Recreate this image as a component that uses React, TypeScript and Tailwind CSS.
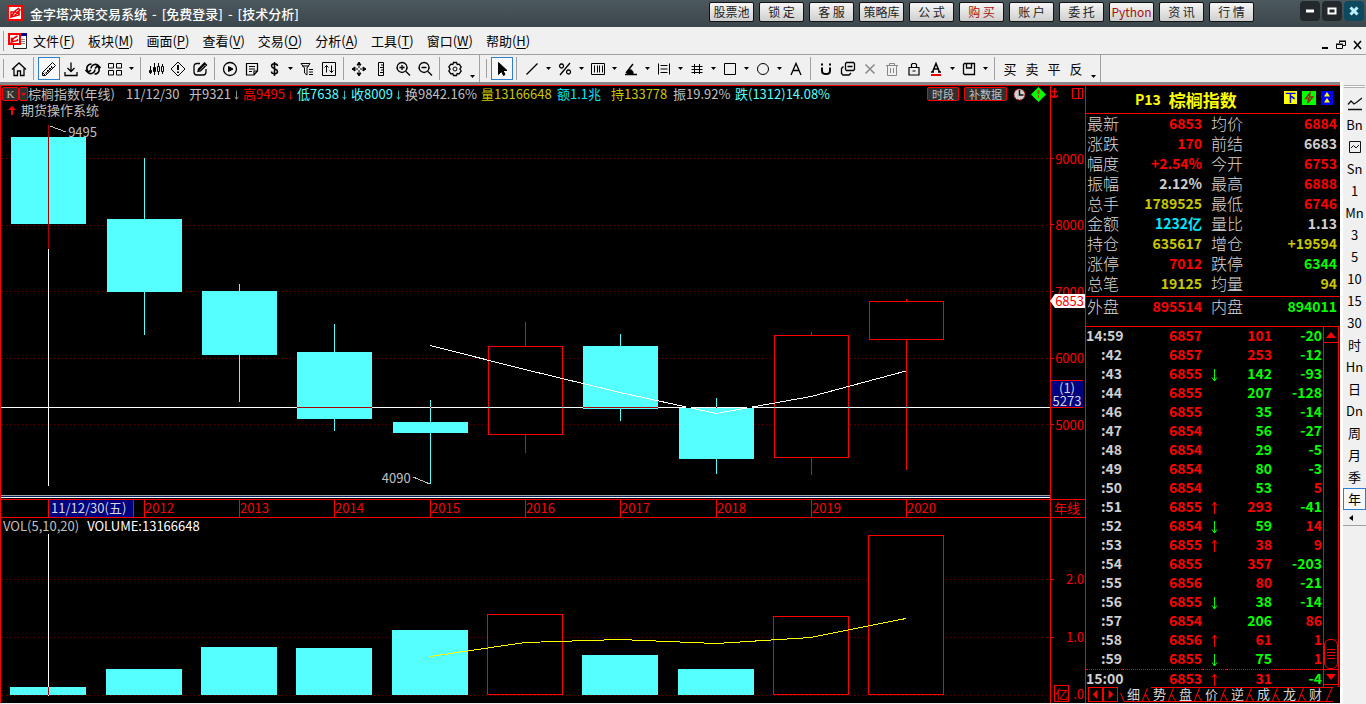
import React from 'react';

const titleButtons = ['股票池', '锁 定', '客 服', '策略库', '公 式', '购 买', '账 户', '委 托', 'Python', '资 讯', '行 情'];

const menus = [
  ['文件', 'F'],
  ['板块', 'M'],
  ['画面', 'P'],
  ['查看', 'V'],
  ['交易', 'O'],
  ['分析', 'A'],
  ['工具', 'T'],
  ['窗口', 'W'],
  ['帮助', 'H'],
];

// x = centre of the year column, body = [top, bottom], wick = [high, low]
const candles = [
  { x: 48, body: [137, 224], wick: [125, 249], up: false },
  { x: 144, body: [219, 292], wick: [158, 335], up: false },
  { x: 239, body: [291, 355], wick: [284, 402], up: false },
  { x: 334, body: [352, 419], wick: [324, 431], up: false },
  { x: 430, body: [422, 433], wick: [400, 484], up: false },
  { x: 525, body: [346, 435], wick: [322, 453], up: true },
  { x: 620, body: [346, 409], wick: [334, 421], up: false },
  { x: 716, body: [408, 459], wick: [398, 474], up: false },
  { x: 811, body: [335, 458], wick: [332, 475], up: true },
  { x: 906, body: [301, 340], wick: [299, 470], up: true },
];

const volumes = [687, 669, 647, 648, 630, 614, 655, 669, 616, 535];

const years = ['2012', '2013', '2014', '2015', '2016', '2017', '2018', '2019', '2020'];

const R = 'text-[#ff0000]';
const G = 'text-[#00ff00]';
const Y = 'text-[#c8c800]';
const W = 'text-[#d0d0d0]';
const C = 'text-[#00e8ff]';

const quotes = [
  ['最新', '6853', R, '均价', '6884', R],
  ['涨跌', '170', R, '前结', '6683', W],
  ['幅度', '+2.54%', R, '今开', '6753', R],
  ['振幅', '2.12%', W, '最高', '6888', R],
  ['总手', '1789525', Y, '最低', '6746', R],
  ['金额', '1232亿', C, '量比', '1.13', W],
  ['持仓', '635617', Y, '增仓', '+19594', Y],
  ['涨停', '7012', R, '跌停', '6344', G],
  ['总笔', '19125', Y, '均量', '94', Y],
];

const ticks = [
  ['14:59', '6857', '', '101', R, '-20'],
  [':42', '6857', '', '253', R, '-12'],
  [':43', '6855', 'down', '142', G, '-93'],
  [':44', '6855', '', '207', G, '-128'],
  [':46', '6855', '', '35', G, '-14'],
  [':47', '6854', '', '56', G, '-27'],
  [':48', '6854', '', '29', G, '-5'],
  [':49', '6854', '', '80', G, '-3'],
  [':50', '6854', '', '53', G, '5'],
  [':51', '6855', 'up', '293', R, '-41'],
  [':52', '6854', 'down', '59', G, '14'],
  [':53', '6855', 'up', '38', R, '9'],
  [':54', '6855', '', '357', R, '-203'],
  [':55', '6856', '', '80', R, '-21'],
  [':56', '6855', 'down', '38', G, '-14'],
  [':57', '6854', '', '206', G, '86'],
  [':58', '6856', 'up', '61', R, '1'],
  [':59', '6855', 'down', '75', G, '1'],
  ['15:00', '6853', 'up', '31', R, '-4'],
];

const tabs = ['细', '势', '盘', '价', '逆', '成', '龙', '财'];

const periods = ['line', 'Bn', 'box', 'Sn', '1', 'Mn', '3', '5', '10', '15', '30', '时', 'Hn', '日', 'Dn', '周', '月', '季', '年'];

const icons: Record<string, React.ReactNode> = {
  home: <path d="M1 8.500 8 2l7 6.500M3 7.500V14.500h3.500V10h3v4.500H13V7.500" strokeWidth="1.300" />,
  pencil: <path d="M1.500 11.500 11.500 1.500l3 3-10 10zM1.500 11.500v3h3M4 11.500l1.500 1.500M6 9l1.500 1.500M8 7l1.500 1.500M10 5l1.500 1.500M5 12l6-6" />,
  download: <path d="M8 1.500v9M4.500 7 8 10.500 11.500 7M2 11v3.500h12V11" strokeWidth="1.300" />,
  refresh: <path strokeWidth="1.600" d="M6.500 3C2.500 3 .5 7 3 10.500M.5 9l2.500 2.500L6 9M9.500 13c4 0 6-4 3.500-7.500M10 7.500 13 4.500l2.500 2.500M6 7.500C6 4 10 2.500 12.500 4M10 8.500c0 3.500-4 5-6.500 3.500" />,
  grid: <path d="M1.500 2.500h5v4.500h-5zM9.500 2.500h5v4.500h-5zM1.500 9.500h5V14h-5zM9.500 9.500h5V14h-5z" />,
  candles: <><path d="M2.500 5v8M6.500 2v12M10.500 2v12M14.500 3v10" /><path fill="#f0f0f0" d="M9.500 5.500h2v5h-2zM13.500 5.500h2v5h-2z" /><path fill="currentColor" d="M1.500 9.500h2v2h-2zM5.500 6.500h2v4h-2z" /></>,
  alert: <><path d="M8 1 15 8l-7 7-7-7z" /><path d="M8 4v5M8 10.500V12" strokeWidth="2" /></>,
  edit: <path strokeWidth="1.300" d="M8 2.500H5c-2 0-3 1-3 3V11c0 2 1 3 3 3h6c2 0 3-1 3-3V8M6 10.500 6.500 8 12.500 2l2 2L8.500 10zM7 9l6-6" />,
  play: <><circle cx="8" cy="8" r="6.500" strokeWidth="1.300" /><path fill="currentColor" d="M6.500 5.500v5L11 8z" /></>,
  note: <path d="M2.500 2.500h11V10L10 14H2.500zM5 5.500h6M5 8h6M10 14v-4h3.500M5 10.500h3" strokeWidth="1.200" />,
  dollar: <path strokeWidth="1.500" d="M8.500 1v14M11.500 5c0-3-6-3-6 0 0 3 6 2.500 6 5.500 0 3-6 3-6 0" />,
  filter: <path d="M2 2.500h9L8 7v7L5.500 12V7zM10 8.500h4M10 11h4M10 13.500h4M3 5h7" />,
  sort: <path d="M1.500 1.500h13v13h-13zM5.500 4.500v7M3.500 6.500l2-2 2 2M10.500 4.500v7M8.500 9.500l2 2 2-2" />,
  move: <path fill="currentColor" d="M8 1 6 4h4zM8 15l-2-3h4zM1 8l3-2v4zM15 8l-3-2v4zM8 5v2M8 9v2M5 8h2M9 8h2" />,
  ruler: <path d="M5.500 1.500h5v13h-5zM8 4h2.500M7 6.500h3.500M8 9h2.500M7 11.500h3.500" />,
  zoomin: <path d="M7 1.500a5 5 0 1 0 .1 0zM11 10.500l4 4M4.500 6.500h5M7 4v5" strokeWidth="1.300" />,
  zoomout: <path d="M7 1.500a5 5 0 1 0 .1 0zM11 10.500l4 4M4.500 6.500h5" strokeWidth="1.300" />,
  gear: <><circle cx="8" cy="8" r="2" /><path strokeWidth="1.300" d="M6.500 1.500h3l.7 2 2-.3 2 2.800L12.900 8l1.300 2-2 2.800-2-.3-.7 2h-3l-.7-2-2 .3-2-2.800L3.100 8 1.800 6l2-2.800 2 .3z" /></>,
  cursor: <path fill="currentColor" d="M4.500 1.500v12l3-3 2 4 1.500-1-2-4h4z" />,
  slash: <path strokeWidth="1.300" d="M2.500 13.500 13.500 2.500" />,
  percent: <path strokeWidth="1.300" d="M13 2 3 14M4.500 3a2 2 0 1 0 .1 0zM11.500 9a2 2 0 1 0 .1 0z" />,
  barcode: <path d="M1.500 2.500h13v11h-13zM4.500 4.500v7M7.500 4.500v7M9.500 4.500v7M12.500 4.500v7" />,
  angle: <><path strokeWidth="1.500" d="M2 13.500h12M3 12l7-9" /><path fill="currentColor" d="M5.500 9c3-1 5 1 4.500 4H4z" /></>,
  levels: <path d="M2.500 2.500v11M13.500 2.500v11M4.500 4.500h7M4.500 8h7M4.500 11.500h7" />,
  hash: <path d="M5.500 3v10M10.500 3v10M2.500 5.500h11M2.500 8.500h11M2.500 11.500h11" />,
  square: <path d="M2.500 2.500h11v11h-11z" />,
  circle: <circle cx="8" cy="8" r="5.500" />,
  letter: <path strokeWidth="1.300" d="M3 14 8 2.500 13 14M5 9.500h6" />,
  magnet: <path strokeWidth="2" d="M4 6.500V10c0 4 8 4 8 0V6.500M4 2.500v2M12 2.500v2" />,
  copy: <path d="M6.500 1.500h7l1 1v6l-1 1h-7l-1-1v-6zM3.500 5.500l-2 2v5l1.500 1.500h6l2-2M7.500 5.500h5" strokeWidth="1.300" />,
  cross: <path stroke="#888" strokeWidth="1.500" d="M3.500 3.500l9 9M12.500 3.500l-9 9" />,
  trash: <path stroke="#888" d="M2 4.500h12M5.500 4.500v-2h5v2M3.500 4.500v10h9v-10M6.500 7v5M9.500 7v5" />,
  lock: <path strokeWidth="1.200" d="M3 6.500h10v7.500H3zM5.500 6.500v-3l1-1h3l1 1v3M6.500 10h3" />,
  fontcolor: <><path strokeWidth="1.500" d="M4.500 11 8 2.500 11.500 11M5.500 8h5M3 11h3M10 11h3" /><path stroke="#e00" strokeWidth="2" d="M3 14h10" /></>,
  save: <path strokeWidth="1.300" d="M2.500 3.500l1-1h10v11h-10l-1-1zM5.500 2.500v4.500h5V2.500" />,
};

const Icon = ({ name }: { name: string }) => (
  <svg className="size-4" viewBox="0 0 16 16" fill="none" stroke="currentColor">
    {icons[name]}
  </svg>
);

const Caret = ({ low = false }: { low?: boolean }) => (
  <button aria-label="更多" className={low ? 'flex w-[13px] items-end justify-center pb-1' : 'flex w-[11px] items-center justify-center'}>
    <svg className="h-[3px] w-[5px]" viewBox="0 0 5 3">
      <path d="M0 0h5L2.500 3z" />
    </svg>
  </button>
);

// '|' separator, 'v' drop-down arrow, 'V' overflow arrow, '*' marks a pressed button
const ToolGroup = ({ items }: { items: string[] }) => (
  <div className="flex h-[27px] border-r border-[#a0a0a0]">
    <span className="my-1 ml-[3px] mr-1 w-px bg-[#a0a0a0]" />
    {items.map((item, i) => {
      if (item === '|') return <span key={i} className="my-[2px] ml-[3px] mr-1 w-px bg-[#a0a0a0]" />;
      if (item === 'v') return <Caret key={i} />;
      if (item === 'V') return <Caret key={i} low />;
      const pressed = item.endsWith('*');
      const name = item.replace('*', '');
      return (
        <button
          key={i}
          aria-label={name}
          className={
            pressed
              ? 'my-[2px] flex w-[22px] items-center justify-center border border-[#2f7fd0] bg-[#f8f8f8]'
              : 'my-[2px] flex w-[22px] items-center justify-center text-[13px]'
          }
        >
          {icons[name] ? <Icon name={name} /> : name}
        </button>
      );
    })}
  </div>
);

const TitleBar = () => (
  <header className="flex h-[27px] items-start bg-linear-to-b from-[#4b585d] to-[#3c474b] pl-[7px] pr-[2px] text-white">
    <svg className="mt-[5px] size-4" viewBox="0 0 16 16">
      <path fill="#f00" d="M0 0h16v16H0z" />
      <path fill="#fff" d="M2 2h12v12H2z" />
      <path fill="none" stroke="#e00" strokeWidth="1.500" d="M4 12V7h3.500L4 12l8-2V7L7.500 10M8 6l3.500-2.500L13 5 9.500 8z" />
    </svg>
    <h1 className="ml-[7px] flex flex-1 gap-[5px] text-[13px] font-medium leading-[28px]">
      <span>金字塔决策交易系统</span>
      <span>-</span>
      <span>[免费登录]</span>
      <span>-</span>
      <span>[技术分析]</span>
    </h1>
    <nav className="flex gap-[5px] pt-[2px]">
      {titleButtons.map((label) => (
        <button
          key={label}
          className={`h-5 w-[45px] whitespace-nowrap rounded-[2px] border border-[#111] bg-linear-to-b from-[#f6f6f6] to-[#cfcfcf] text-[12px] leading-[18px] ${
            label === '购 买' || label === 'Python' ? 'text-[#a81010]' : 'text-[#222]'
          }`}
        >
          {label}
        </button>
      ))}
    </nav>
    <div className="ml-[46px] flex gap-[2px] pt-px">
      {['M6 10h8', 'M6.500 7.500h7v5h-7z', 'M6.500 6.500l7 7M13.500 6.500l-7 7'].map((d, i) => (
        <button key={d} aria-label={['最小化', '最大化', '关闭'][i]} className={i === 2 ? 'rounded bg-[#0d4a60]' : 'rounded bg-[#22282b]'}>
          <svg className="size-5" viewBox="0 0 20 20" fill="none" stroke={i === 2 ? '#bdf0ff' : '#fff'} strokeWidth={i === 1 ? 2 : 3}>
            <path d={d} />
          </svg>
        </button>
      ))}
    </div>
  </header>
);

const MenuBar = () => (
  <div className="flex h-7 items-center border-b border-[#a0a0a0] pl-[3px] pr-1">
    <span className="h-5 w-px bg-[#a0a0a0]" />
    <svg className="ml-1 h-[18px] w-5" viewBox="0 0 20 18">
      <path fill="#fff" stroke="#222" d="M5.500 1.500h13v15h-13z" />
      <path fill="#008" d="M5 1h14v3H5z" />
      <path stroke="#888" d="M13 7.500h4M13 9.500h4M13 11.500h4" />
      <path fill="#fff" stroke="#f00" strokeWidth="2" d="M1 2h11v10H1z" />
      <path fill="none" stroke="#e00" strokeWidth="1.500" d="M3.500 10V6.500h2L3.500 10l6-1.500V7M6 6l3.500-2" />
    </svg>
    <nav className="ml-[5px] flex flex-1 gap-[13px] text-[13px] leading-5">
      {menus.map(([label, key]) => (
        <button key={key}>
          {label}(<u className="underline-offset-2">{key}</u>)
        </button>
      ))}
    </nav>
    <div className="flex items-end gap-[7px] pt-2">
      <button aria-label="最小化窗口">
        <svg className="h-[10px] w-2" viewBox="0 0 8 10"><path d="M1 7h6v2H1z" /></svg>
      </button>
      <button aria-label="还原窗口">
        <svg className="size-[10px]" viewBox="0 0 10 10" fill="none" stroke="#000"><path d="M3.500 3V1.500h6v4H7M.5 4.500h6v4h-6zM3 1h7M0 4h7" /></svg>
      </button>
      <button aria-label="关闭窗口">
        <svg className="h-[10px] w-[9px]" viewBox="0 0 9 10" stroke="#000" strokeWidth="1.500"><path d="M1 1l7 8M8 1 1 9" /></svg>
      </button>
    </div>
  </div>
);

const Arrow = ({ up = false, className = '' }: { up?: boolean; className?: string }) => (
  <svg className={`inline-block w-[7px] ${className}`} viewBox="0 0 7 14" fill="none" stroke="currentColor">
    <path d={up ? 'M3.500 13V1M1 4.500l2.500-3.500L6 4.500' : 'M3.500 1v12M1 9.500 3.500 13 6 9.500'} />
  </svg>
);

const ChartHeader = () => (
  <div className="h-8 whitespace-nowrap text-[13px] leading-4 text-[#c0c0c0]">
    <div className="flex h-4 items-center">
      <button className="ml-px h-[14px] w-[17px] shrink-0 rounded-[2px] border border-[#f00] bg-[#303030] font-['Liberation_Serif',serif] text-[11px] leading-[12px]">K</button>
      <button aria-label="选择周期" className="flex h-[14px] w-[9px] shrink-0 items-center justify-center rounded-[2px] border border-[#f00] bg-[#303030]">
        <svg className="h-[3px] w-[5px] shrink-0" viewBox="0 0 5 3" fill="#f00"><path d="M0 0h5L2.500 3z" /></svg>
      </button>
      <span className="w-[98px]">棕榈指数(年线)</span>
      <span className="w-[63px]">11/12/30</span>
      <span className="w-[54px]">开9321<Arrow className="ml-[2px] h-[10px]" /></span>
      <span className="w-[54px] text-[#f00]">高9495<Arrow className="ml-[2px] h-[10px]" /></span>
      <span className="w-[54px] text-[#55ffff]">低7638<Arrow className="ml-[2px] h-[10px]" /></span>
      <span className="w-[54px] text-[#55ffff]">收8009<Arrow className="ml-[2px] h-[10px]" /></span>
      <span className="w-[76px]">换9842.16%</span>
      <span className="w-[76px] text-[#c8c800]">量13166648</span>
      <span className="w-[54px] text-[#00e8ff]">额1.1兆</span>
      <span className="w-[62px] text-[#c8c800]">持133778</span>
      <span className="w-[62px]">振19.92%</span>
      <span className="flex-1 text-[#55ffff]">跌(1312)14.08%</span>
      <button className="h-[14px] w-8 rounded-[2px] border border-[#f00] bg-[#303030] text-[11px] leading-[12px]">时段</button>
      <button className="ml-[5px] h-[14px] w-[43px] rounded-[2px] border border-[#f00] bg-[#303030] text-[11px] leading-[12px]">补数据</button>
      <svg className="ml-[6px] size-[13px]" viewBox="0 0 13 13">
        <circle cx="6.500" cy="6.500" r="5.500" fill="#d0d0d0" stroke="#c00" strokeDasharray="2 1" />
        <path d="M6.500 2v5h4" fill="none" stroke="#111" strokeWidth="1.500" />
      </svg>
      <svg className="ml-[5px] mr-[4px] size-[15px]" viewBox="0 0 15 15">
        <path d="M7.500 0 15 7.500 7.500 15 0 7.500z" fill="#0f0" />
        <path d="M6.500 3h2v4h-2zM7 8h1v3H7z" fill="#a05000" />
      </svg>
    </div>
    <div className="flex h-4 items-center">
      <svg className="ml-[7px] mr-[5px] h-[9px] w-2" viewBox="0 0 8 9" fill="#f00"><path d="M4 0 0 4h3v5h2V4h3z" /></svg>
      <span>期货操作系统</span>
    </div>
  </div>
);

const Grid = ({ rows }: { rows: number[] }) => (
  <g stroke="#600000" strokeDasharray="1 3">
    {rows.map((y) => (
      <path key={y} d={`M2 ${y + 0.5}H1050`} />
    ))}
  </g>
);

const PriceChart = () => (
  <div className="relative">
    <svg className="isolate block h-[377px] w-full" viewBox="1 118 1049 377" preserveAspectRatio="none" shapeRendering="crispEdges">
      <path d="M1 118h1049v377H1z" />
      <Grid rows={[158, 225, 291, 358, 424]} />
      {candles.map(({ x, body, wick, up }) => (
        <g key={x} fill={up ? '#f00' : '#55ffff'}>
          <rect x={x} y={wick[0]} width="1" height={wick[1] - wick[0]} />
          {up ? (
            <rect x={x - 36.5} y={body[0] + 0.5} width="74" height={body[1] - body[0] - 1} fill="#000" stroke="#f00" />
          ) : (
            <rect x={x - 37} y={body[0]} width="75" height={body[1] - body[0]} />
          )}
        </g>
      ))}
      <path d="M430 345.500 525 369.500 620 392.500 716 413.500 811 396.500 906 371" fill="none" stroke="#fff" />
      <path d="M50 126 66 132M413 477l17 7" stroke="#c0c0c0" />
      {/* crosshair inverts whatever it crosses */}
      <g fill="#fff" className="mix-blend-difference">
        <rect x="48" y="125" width="1" height="361" />
        <rect x="1" y="407" width="1049" height="1" />
      </g>
    </svg>
    <span className="absolute left-[6.4%] top-[6px] text-[13px] leading-4 text-[#c0c0c0]">9495</span>
    <span className="absolute left-[36.3%] top-[352px] text-[13px] leading-4 text-[#c0c0c0]">4090</span>
  </div>
);

const PriceAxis = () => (
  <div className="relative w-[35px] border-l border-[#f00] text-[13px] text-[#f00]">
    <div className="flex h-[39px] items-start justify-between pr-[2px] pt-[2px]">
      <svg className="h-3 w-[7px]" viewBox="0 0 7 12" fill="none" stroke="#f00"><path d="M3.500 0v10M1 3.500h5M0 7c1 3 6 3 7 0" strokeWidth="1.500" /></svg>
      <svg className="size-[11px]" viewBox="0 0 11 11" fill="none" stroke="#f00"><path d="M.5.5h10v10H.5zM6.500 0v11" /></svg>
    </div>
    <div className="grid h-[333px] grid-rows-5">
      {['9000', '8000', '7000', '6000', '5000'].map((v) => (
        <div key={v} className="flex items-center justify-between pr-px">
          <span className="h-px w-[3px] bg-[#f00]" />
          {v}
        </div>
      ))}
    </div>
    <div className="absolute right-0 top-[208px] flex h-[14px] items-center">
      <svg className="h-[14px] w-[5px]" viewBox="0 0 5 14"><path fill="#fff" d="M0 7 5 0v14z" /></svg>
      <span className="h-[14px] bg-white pr-px text-[13px] leading-[14px]">6853</span>
    </div>
    <div className="absolute left-0 top-[294px] h-7 w-8 border-y border-[#f00] bg-[#000080] text-center leading-[13px] text-[#d8d8d8]">
      (1)<br />5273
    </div>
  </div>
);

const TimeAxis = () => (
  <div className="flex h-[19px] border-y border-[#f00] text-[13px] leading-4 text-[#f00]">
    <div className="grid flex-1 grid-cols-[47fr_96fr_95fr_95fr_96fr_95fr_95fr_96fr_95fr_95fr_144fr]">
      <span />
      <span className="flex border-l border-[#f00]">
        <span className="w-[85px] whitespace-nowrap border-r border-[#f00] bg-[#000080] pl-[2px] text-[#d8d8d8]">11/12/30(五)</span>
      </span>
      {years.map((year) => (
        <span key={year} className="border-l border-[#f00]">{year}</span>
      ))}
    </div>
    <span className="w-[35px] border-l border-[#f00] pl-[3px]">年线</span>
  </div>
);

const VolumeChart = () => (
  <div className="flex">
    <div className="min-w-0 flex-1">
      <p className="flex h-4 gap-2 pl-[2px] text-[13px] leading-4 text-[#c0c0c0]">
        <span>VOL(5,10,20)</span>
        <span className="text-white">VOLUME:13166648</span>
      </p>
      <svg className="isolate block h-[169px] w-full" viewBox="1 534 1049 169" preserveAspectRatio="none" shapeRendering="crispEdges">
        <path d="M1 534h1049v169H1z" />
        <Grid rows={[579, 637, 695]} />
        {candles.map(({ x, up }, i) =>
          up ? (
            <rect key={x} x={x - 37.5} y={volumes[i] + 0.5} width="75" height={694 - volumes[i]} fill="#000" stroke="#f00" />
          ) : (
            <rect key={x} x={x - 38} y={volumes[i]} width="76" height={695 - volumes[i]} fill="#55ffff" />
          ),
        )}
        <path d="M430 656.500 525 642.500 620 639.500 716 643.500 811 637.500 906 618.500" fill="none" stroke="#ff0" />
        <rect x="48" y="534" width="1" height="162" fill="#fff" className="mix-blend-difference" />
      </svg>
    </div>
    <div className="w-[35px] border-l border-[#f00] pt-8 text-[13px] text-[#f00]">
      {['2.0', '1.0'].map((v) => (
        <div key={v} className="flex h-[58px] items-center justify-between pr-px">
          <span className="h-px w-[3px] bg-[#f00]" />
          {v}
        </div>
      ))}
      <div className="flex h-9 items-end justify-between pl-[3px] pr-px">
        <span className="h-[17px] w-[15px] border border-[#f00] text-center leading-[15px]">亿</span>
        <span className="leading-4">.0</span>
      </div>
    </div>
  </div>
);

const QuotePanel = () => (
  <aside className="flex w-[254px] flex-col">
    <div className="flex h-7 items-center border-b border-[#f00] pl-[49px] pr-[7px] font-bold text-[#ff0]">
      <span className="text-[14px]">P13</span>
      <span className="ml-2 flex-1 text-[17px] leading-6">棕榈指数</span>
      <div className="flex items-center gap-[5px] pb-1">
        <button className="size-[13px] bg-[#ff0] text-[11px] leading-[13px] text-[#00f]">下</button>
        <button aria-label="闪电下单" className="bg-[#0f0]">
          <svg className="size-[14px]" viewBox="0 0 14 14" fill="none" stroke="#a02000" strokeWidth="1.300"><path d="M8 2 3.500 7.500H7L5.500 12 11 6H7.500z" /></svg>
        </button>
        <button aria-label="上移" className="bg-[#00f]">
          <svg className="h-[14px] w-3" viewBox="0 0 12 14" fill="#ff0"><path d="M6 1 9 5.500H3zM6 7l3 4.500H3z" /></svg>
        </button>
      </div>
    </div>
    <table className="w-full table-fixed text-right align-top text-[14px] leading-[18px]">
      <colgroup>
        <col className="w-9" />
        <col className="w-20" />
        <col className="w-[45px]" />
        <col />
      </colgroup>
      <tbody>
        {quotes.map(([a, av, ac, b, bv, bc]) => (
          <tr key={a} className="h-5 align-top">
            <th className="whitespace-nowrap pl-px text-left text-[16px] font-light">{a}</th>
            <td className={`font-bold ${ac}`}>{av}</td>
            <th className="whitespace-nowrap pl-[9px] text-left text-[16px] font-light">{b}</th>
            <td className={`pr-[3px] font-bold ${bc}`}>{bv}</td>
          </tr>
        ))}
      </tbody>
    </table>
    <div className="mt-[2px] flex h-[30px] border-t border-[#f00] text-[14px] font-bold leading-[18px]">
      <span className="w-9 pl-px text-[16px] font-light text-[#d8d8d8]">外盘</span>
      <span className="w-20 text-right text-[#f00]">895514</span>
      <span className="w-[45px] pl-[9px] text-[16px] font-light text-[#d8d8d8]">内盘</span>
      <span className="flex-1 pr-[3px] text-right text-[#0f0]">894011</span>
    </div>
    <div className="flex border-t border-[#f00]">
      <table className="w-[237px] table-fixed text-right text-[14px] font-bold leading-4">
        <colgroup>
          <col className="w-9" />
          <col className="w-20" />
          <col className="w-6" />
          <col className="w-[46px]" />
          <col className="w-[51px]" />
        </colgroup>
        <tbody>
          {ticks.map(([time, price, dir, lots, color, delta], i) => (
            <tr key={time} className={i === 18 ? 'h-[18px] border-t border-dotted border-[#f00] align-top' : 'h-[19px] align-top'}>
              <td className="text-[#d0d0d0]">{time}</td>
              <td className="text-[#f00]">{price}</td>
              <td className={`text-center ${dir === 'up' ? R : G}`}>
                {dir && <Arrow up={dir === 'up'} className="h-[14px] align-middle" />}
              </td>
              <td className={color}>{lots}</td>
              <td className={`pr-px ${delta.startsWith('-') ? G : R}`}>{delta}</td>
            </tr>
          ))}
        </tbody>
      </table>
      <div className="flex w-4 flex-col border-x border-[#f00]">
        <button aria-label="向上滚动" className="flex h-4 items-center justify-center border-b border-[#f00]">
          <svg className="h-[6px] w-[10px]" viewBox="0 0 10 6" fill="#f00"><path d="M5 0l5 6H0z" /></svg>
        </button>
        <div className="flex-1" />
        <div className="flex h-[30px] flex-col items-center justify-center gap-[2px] rounded-[6px] border border-[#f00]">
          <span className="h-px w-2 bg-[#f00]" />
          <span className="h-px w-2 bg-[#f00]" />
          <span className="h-px w-2 bg-[#f00]" />
          <span className="h-px w-2 bg-[#f00]" />
        </div>
        <button aria-label="向下滚动" className="mb-[2px] flex h-4 items-center justify-center border-y border-[#f00]">
          <svg className="h-[6px] w-[10px]" viewBox="0 0 10 6" fill="#f00"><path d="M0 0h10L5 6z" /></svg>
        </button>
      </div>
    </div>
    <div className="flex h-[15px] pl-[2px] text-[13px] leading-3 text-[#d8d8d8]">
      {['M9 2v10L4 7z', 'M5 2v10l5-5z'].map((d, i) => (
        <button key={d} aria-label={i ? '下一页' : '上一页'} className="h-[15px] w-[15px] border border-[#f00]">
          <svg className="size-[13px]" viewBox="0 0 14 14" fill="#f00"><path d={d} /></svg>
        </button>
      ))}
      <svg className="ml-[2px] h-[15px] w-[5px]" viewBox="0 0 5 15" fill="none" stroke="#f00"><path d="M.5 6 4 14.500h1" /></svg>
      {tabs.map((tab, i) => (
        <button key={tab} className={`flex h-[15px] w-[26px] items-start border-b border-[#f00] ${i ? 'border-t' : 'pt-px'}`}>
          <span className="flex-1 text-center">{tab}</span>
          <svg className="h-[14px] w-[9px]" viewBox="0 0 9 14" fill="none" stroke="#f00">
            <path d={i < 7 ? 'M0 14 5.500 0M3 5l5 9' : 'M2 14 8 0'} />
          </svg>
        </button>
      ))}
    </div>
  </aside>
);

const PeriodBar = () => (
  <nav className="w-[23px] bg-[#f0f0f0] pt-[3px] text-[13px] text-black">
    <div className="mx-px mb-1 h-[3px] border-y border-[#b0b0b0] bg-white" />
    {periods.map((p) => (
      <button
        key={p}
        aria-label={p}
        className={`flex h-[22px] w-full items-center justify-center leading-5 ${p === '年' ? 'border border-[#2f7fd0] bg-[#f8f8f8]' : ''}`}
      >
        {p === 'line' && (
          <svg className="size-4" viewBox="0 0 16 16" fill="none" stroke="#111"><path d="M1 9.500 4 6l3 3 3-2 5-4M1 14.500h14" strokeWidth="1.300" /></svg>
        )}
        {p === 'box' && (
          <svg className="size-[14px]" viewBox="0 0 14 14" fill="none" stroke="#111"><path d="M1.500 1.500h11v11h-11zM3 8l2.500-2.500L8 8l3-3" /></svg>
        )}
        {p !== 'line' && p !== 'box' && p}
      </button>
    ))}
    <div className="flex h-4 items-center justify-start border-b border-[#a0a0a0] pl-[6px]">
      <svg className="h-[6px] w-[4px]" viewBox="0 0 4 6"><path d="M4 0v6L0 3z" /></svg>
    </div>
  </nav>
);

const App = () => {
  return (
    <div className="flex min-h-screen flex-col bg-[#f0f0f0] font-['Noto_Sans_CJK_SC',sans-serif] text-black">
      <TitleBar />
      <MenuBar />
      <div className="flex h-[27px] gap-[3px]">
        <ToolGroup
          items={[
            'home', '|', 'pencil*', 'download', 'refresh', 'grid', 'v', '|', 'candles', 'alert', 'edit', '|',
            'play', 'note', 'dollar', 'v', 'filter', 'sort', '|', 'move', 'ruler', 'zoomin', 'zoomout', '|', 'gear', 'V',
          ]}
        />
        <ToolGroup
          items={[
            'cursor*', '|', 'slash', 'v', 'percent', 'v', 'barcode', 'v', 'angle', 'v', 'levels', 'v', 'hash', 'v',
            'square', 'v', 'circle', 'v', 'letter', '|', 'magnet', 'copy', 'cross', 'trash', 'lock', 'fontcolor', 'v',
            'save', 'v', '|', '买', '卖', '平', '反', 'V',
          ]}
        />
      </div>
      <main className="flex flex-1">
        <div className="flex min-w-0 flex-1 border-b border-t-3 border-b-[#f0f0f0] border-t-[#888] bg-black">
          <section className="flex min-w-0 flex-1 flex-col border-x border-t border-[#f00]">
            <div className="flex">
              <div className="min-w-0 flex-1">
                <ChartHeader />
                <PriceChart />
                <div className="mb-px h-[3px] border-b border-t border-b-white border-t-[#a0a0a0] bg-[#002060]" />
              </div>
              <PriceAxis />
            </div>
            <TimeAxis />
            <VolumeChart />
          </section>
          <div className="border-t border-[#f00] text-[#d8d8d8]">
            <QuotePanel />
          </div>
        </div>
        <div className="w-[3px] bg-white" />
        <PeriodBar />
      </main>
    </div>
  );
};

export default App;
